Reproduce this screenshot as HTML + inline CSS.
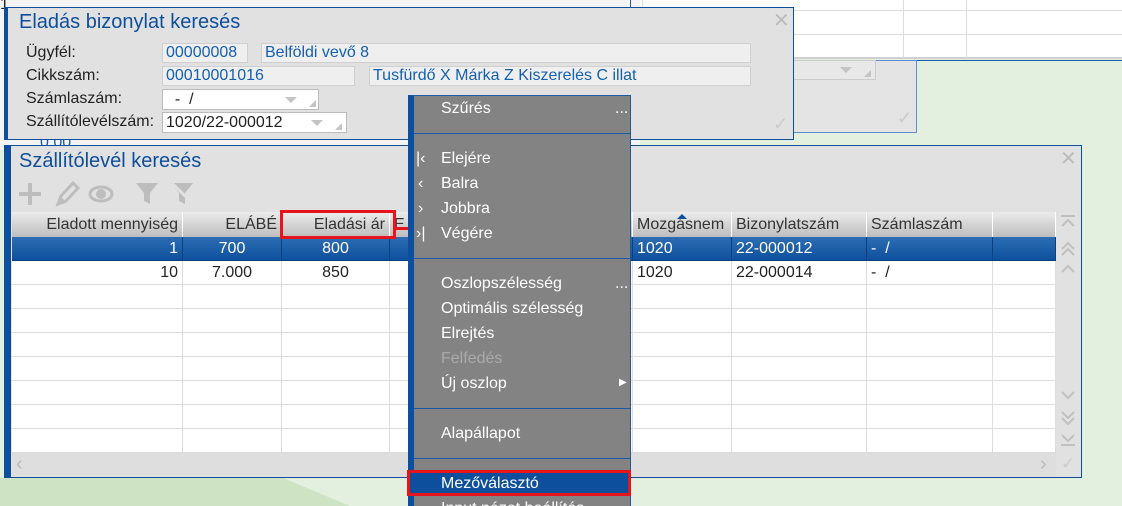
<!DOCTYPE html>
<html><head><meta charset="utf-8"><style>
*{margin:0;padding:0;box-sizing:border-box}
html,body{width:1122px;height:506px;overflow:hidden}
body{position:relative;background:#e3efdf;font-family:"Liberation Sans",Arial,sans-serif;font-size:16px;color:#222}
.a{position:absolute}
.t{white-space:nowrap}
.inp{position:absolute;background:#efefef;border:1px solid #cfcfcf;color:#1560b0;padding-left:3px;line-height:18px;font-size:16px;white-space:nowrap;overflow:hidden}
.cmb{position:absolute;background:#fff;border:1px solid #bbb;color:#222;line-height:19px;padding-left:3px;white-space:nowrap}
.tri{position:absolute;width:0;height:0;border-left:6px solid transparent;border-right:6px solid transparent;border-top:6px solid #c4c4c4}
.crn{position:absolute;width:0;height:0;border-left:7px solid transparent;border-bottom:7px solid #c4c4c4}
.hd{position:absolute;top:212px;height:25px;background:linear-gradient(#ececec,#bdbdbd);border-right:1px solid #fff;line-height:25px;font-size:16px;color:#333;white-space:nowrap;padding:0 4px}
.cell{position:absolute;height:24px;border-right:1px solid #dcdcdc;border-bottom:1px solid #dcdcdc;line-height:24px;white-space:nowrap;padding:0 4px;font-size:16px}
.mi{position:absolute;left:441px;color:#fff;font-size:16px;white-space:nowrap}
.sep{position:absolute;left:414px;width:216px;height:1px;background:#1a5aa8}
</style></head><body>
<div class="a" style="left:0;top:0;width:640px;height:150px;background:#f4f4f4"></div>
<div class="a" style="left:640px;top:0;width:482px;height:58px;background:#fff"></div>
<div class="a" style="left:640px;top:10px;width:482px;height:1px;background:#ddd"></div>
<div class="a" style="left:640px;top:34px;width:482px;height:1px;background:#ddd"></div>
<div class="a" style="left:640px;top:57px;width:482px;height:2px;background:#d0d0d0"></div>
<div class="a" style="left:642px;top:0;width:1px;height:58px;background:#ddd"></div>
<div class="a" style="left:903px;top:0;width:1px;height:58px;background:#ddd"></div>
<div class="a" style="left:966px;top:0;width:1px;height:58px;background:#ddd"></div>
<div class="a" style="left:630px;top:0;width:1px;height:10px;background:#1a5aa8"></div>
<div class="a" style="left:790px;top:60px;width:332px;height:1px;background:#1a5aa8"></div>
<div class="a" style="left:0;top:478px;width:420px;height:28px;background:#cde3c4;clip-path:polygon(0 0,283px 0,350px 28px,0 28px)"></div>
<div class="a t" style="left:0;top:-4px">1</div>
<div class="a t" style="left:40px;top:134px;color:#1560b0">0.00</div>

<div class="a" style="left:780px;top:60px;width:137px;height:73px;background:#e4e4e4;border:1px solid #5b8fcf"></div>
<div class="cmb" style="left:780px;top:60px;width:96px;height:20px;background:#e8e8e8;border-color:#ccc"></div>
<div class="tri" style="left:840px;top:67px"></div><div class="crn" style="left:864px;top:70px"></div>
<div class="a t" style="left:897px;top:108px;color:#ccc;font-size:18px">✓</div>

<div class="a" style="left:4px;top:7px;width:790px;height:133px;background:#e1e1e1;border:1px solid #0d4f9c;border-left:4px solid #0d4f9c"></div>
<div class="a t" style="left:19px;top:11px;font-size:20px;color:#0d4f9c">Eladás bizonylat keresés</div>
<div class="a t" style="left:773px;top:8px;font-size:20px;color:#bbb">✕</div>
<div class="a t" style="left:773px;top:114px;font-size:18px;color:#ccc">✓</div>
<div class="a t" style="left:26px;top:44px">Ügyfél:</div>
<div class="a t" style="left:26px;top:67px">Cikkszám:</div>
<div class="a t" style="left:26px;top:90px">Számlaszám:</div>
<div class="a t" style="left:26px;top:113px">Szállítólevélszám:</div>
<div class="inp" style="left:162px;top:43px;width:86px;height:20px">00000008</div>
<div class="inp" style="left:261px;top:43px;width:490px;height:20px">Belföldi vevő 8</div>
<div class="inp" style="left:162px;top:66px;width:193px;height:20px">00010001016</div>
<div class="inp" style="left:369px;top:66px;width:382px;height:20px">Tusfürdő X Márka Z Kiszerelés C illat</div>
<div class="cmb" style="left:162px;top:89px;width:157px;height:21px">&nbsp;&nbsp;-&nbsp;&nbsp;/</div>
<div class="tri" style="left:285px;top:97px"></div><div class="crn" style="left:309px;top:100px"></div>
<div class="cmb" style="left:162px;top:112px;width:185px;height:21px">1020/22-000012</div>
<div class="tri" style="left:311px;top:120px"></div><div class="crn" style="left:335px;top:123px"></div>

<div class="a" style="left:4px;top:145px;width:1078px;height:333px;background:#e1e1e1;border:1px solid #0d4f9c;border-left:7px solid #0d4f9c"></div>
<div class="a t" style="left:19px;top:150px;font-size:20px;color:#0d4f9c">Szállítólevél keresés</div>
<div class="a t" style="left:1060px;top:146px;font-size:20px;color:#bbb">✕</div>
<svg class="a" style="left:16px;top:180px" width="190" height="28" viewBox="0 0 190 28" fill="none" stroke="#bdbdbd" stroke-width="4">
<path d="M14 3v22M3 14h22"/>
<path d="M42 24l3-8 12-13 5 5-12 13z M44 18l5 5" stroke-width="3"/>
<ellipse cx="85" cy="14" rx="11" ry="7" stroke-width="3"/><circle cx="85" cy="14" r="3" fill="#bdbdbd"/>
<path d="M120 3h22l-8 10v11l-6-3v-8z" fill="#bdbdbd" stroke="none"/>
<path d="M155 3h22l-8 10v11l-6-3v-8z" fill="#bdbdbd" stroke="none"/><path d="M156 3l22 22" stroke="#e1e1e1" stroke-width="3"/>
</svg>
<div class="a" style="left:12px;top:237px;width:1044px;height:216px;background:#fff"></div>
<div class="hd" style="left:12px;width:171px;text-align:right">Eladott mennyiség</div>
<div class="hd" style="left:183px;width:99px;text-align:right">ELÁBÉ</div>
<div class="hd" style="left:282px;width:108px;text-align:right">Eladási ár</div>
<div class="hd" style="left:390px;width:243px">E</div>
<div class="hd" style="left:633px;width:99px">Mozgásnem</div>
<div class="hd" style="left:732px;width:135px">Bizonylatszám</div>
<div class="hd" style="left:867px;width:126px">Számlaszám</div>
<div class="hd" style="left:993px;width:63px"></div>
<div class="a" style="left:677px;top:214px;width:0;height:0;border-left:5px solid transparent;border-right:5px solid transparent;border-bottom:5px solid #0d4f9c"></div>
<div class="a" style="left:12px;top:237px;width:1044px;height:24px;background:linear-gradient(#2c6db3,#0d4f9c)"></div>
<div id="rows"></div>
<script>
var cols=[[12,171,'right'],[183,99,'center'],[282,108,'center'],[390,243,'left'],[633,99,'left'],[732,135,'left'],[867,126,'left'],[993,63,'left']];
var data=[['1','700','800','','1020','22-000012','-&nbsp;&nbsp;/',''],['10','7.000','850','','1020','22-000014','-&nbsp;&nbsp;/','']];
var h='';
for(var r=0;r<9;r++){for(var c=0;c<cols.length;c++){var tx=(data[r]||[])[c]||'';var sel=r==0;
h+='<div class="cell" style="left:'+cols[c][0]+'px;top:'+(237+r*24)+'px;width:'+cols[c][1]+'px;text-align:'+cols[c][2]+';'+(sel?'color:#fff;border-color:#0a3f80;':'')+'">'+tx+'</div>';}}
document.getElementById('rows').innerHTML=h;
</script>
<div class="a" style="left:12px;top:453px;width:1044px;height:24px;background:#dedede"></div>
<div class="a t" style="left:16px;top:453px;font-size:20px;color:#bbb">‹</div>
<div class="a t" style="left:1040px;top:453px;font-size:20px;color:#bbb">›</div>
<div class="a t" style="left:1061px;top:454px;font-size:17px;color:#ccc">✓</div>
<svg class="a" style="left:1058px;top:214px" width="20" height="240" viewBox="0 0 20 240" fill="none" stroke="#c0c0c0" stroke-width="2">
<path d="M3 2h14M4 12l6-6 6 6"/><path d="M4 13l6-6 6 6" transform="translate(0,22)"/><path d="M4 13l6-6 6 6" transform="translate(0,28)"/>
<path d="M4 58l6-6 6 6"/>
<path d="M4 178l6 6 6-6"/><path d="M4 198l6 6 6-6M4 204l6 6 6-6"/><path d="M4 221l6 6 6-6M3 231h14"/>
</svg>
<div class="a" style="left:280px;top:210px;width:116px;height:29px;border:3px solid #e8141b"></div>
<div class="a" style="left:395px;top:227px;width:16px;height:3px;background:#e8141b"></div>
<div class="a" style="left:410px;top:223px;width:0;height:0;border-top:5px solid transparent;border-bottom:5px solid transparent;border-left:10px solid #e8141b"></div>

<div class="a" style="left:408px;top:95px;width:223px;height:420px;background:#838383;border:1px solid #1a5aa8;border-left:6px solid #0d4f9c"></div>
<div class="sep" style="top:133px"></div><div class="sep" style="top:258px"></div><div class="sep" style="top:408px"></div><div class="sep" style="top:458px"></div>
<div class="mi" style="top:100px">Szűrés</div><div class="mi" style="left:615px;top:100px">...</div>
<div class="mi" style="left:416px;top:150px">|‹</div><div class="mi" style="top:150px">Elejére</div>
<div class="mi" style="left:418px;top:175px">‹</div><div class="mi" style="top:175px">Balra</div>
<div class="mi" style="left:418px;top:200px">›</div><div class="mi" style="top:200px">Jobbra</div>
<div class="mi" style="left:416px;top:225px">›|</div><div class="mi" style="top:225px">Végére</div>
<div class="mi" style="top:275px">Oszlopszélesség</div><div class="mi" style="left:615px;top:275px">...</div>
<div class="mi" style="top:300px">Optimális szélesség</div>
<div class="mi" style="top:325px">Elrejtés</div>
<div class="mi" style="top:350px;color:#aaa">Felfedés</div>
<div class="mi" style="top:375px">Új oszlop</div><div class="mi" style="left:619px;top:377px;font-size:10px">▶</div>
<div class="mi" style="top:425px">Alapállapot</div>
<div class="a" style="left:408px;top:471px;width:223px;height:24px;background:#0d4f9c"></div>
<div class="mi" style="top:475px">Mezőválasztó</div>
<div class="mi" style="top:500px">Input nézet beállítás</div>
<div class="a" style="left:407px;top:470px;width:224px;height:26px;border:3px solid #e8141b"></div>
</body></html>
